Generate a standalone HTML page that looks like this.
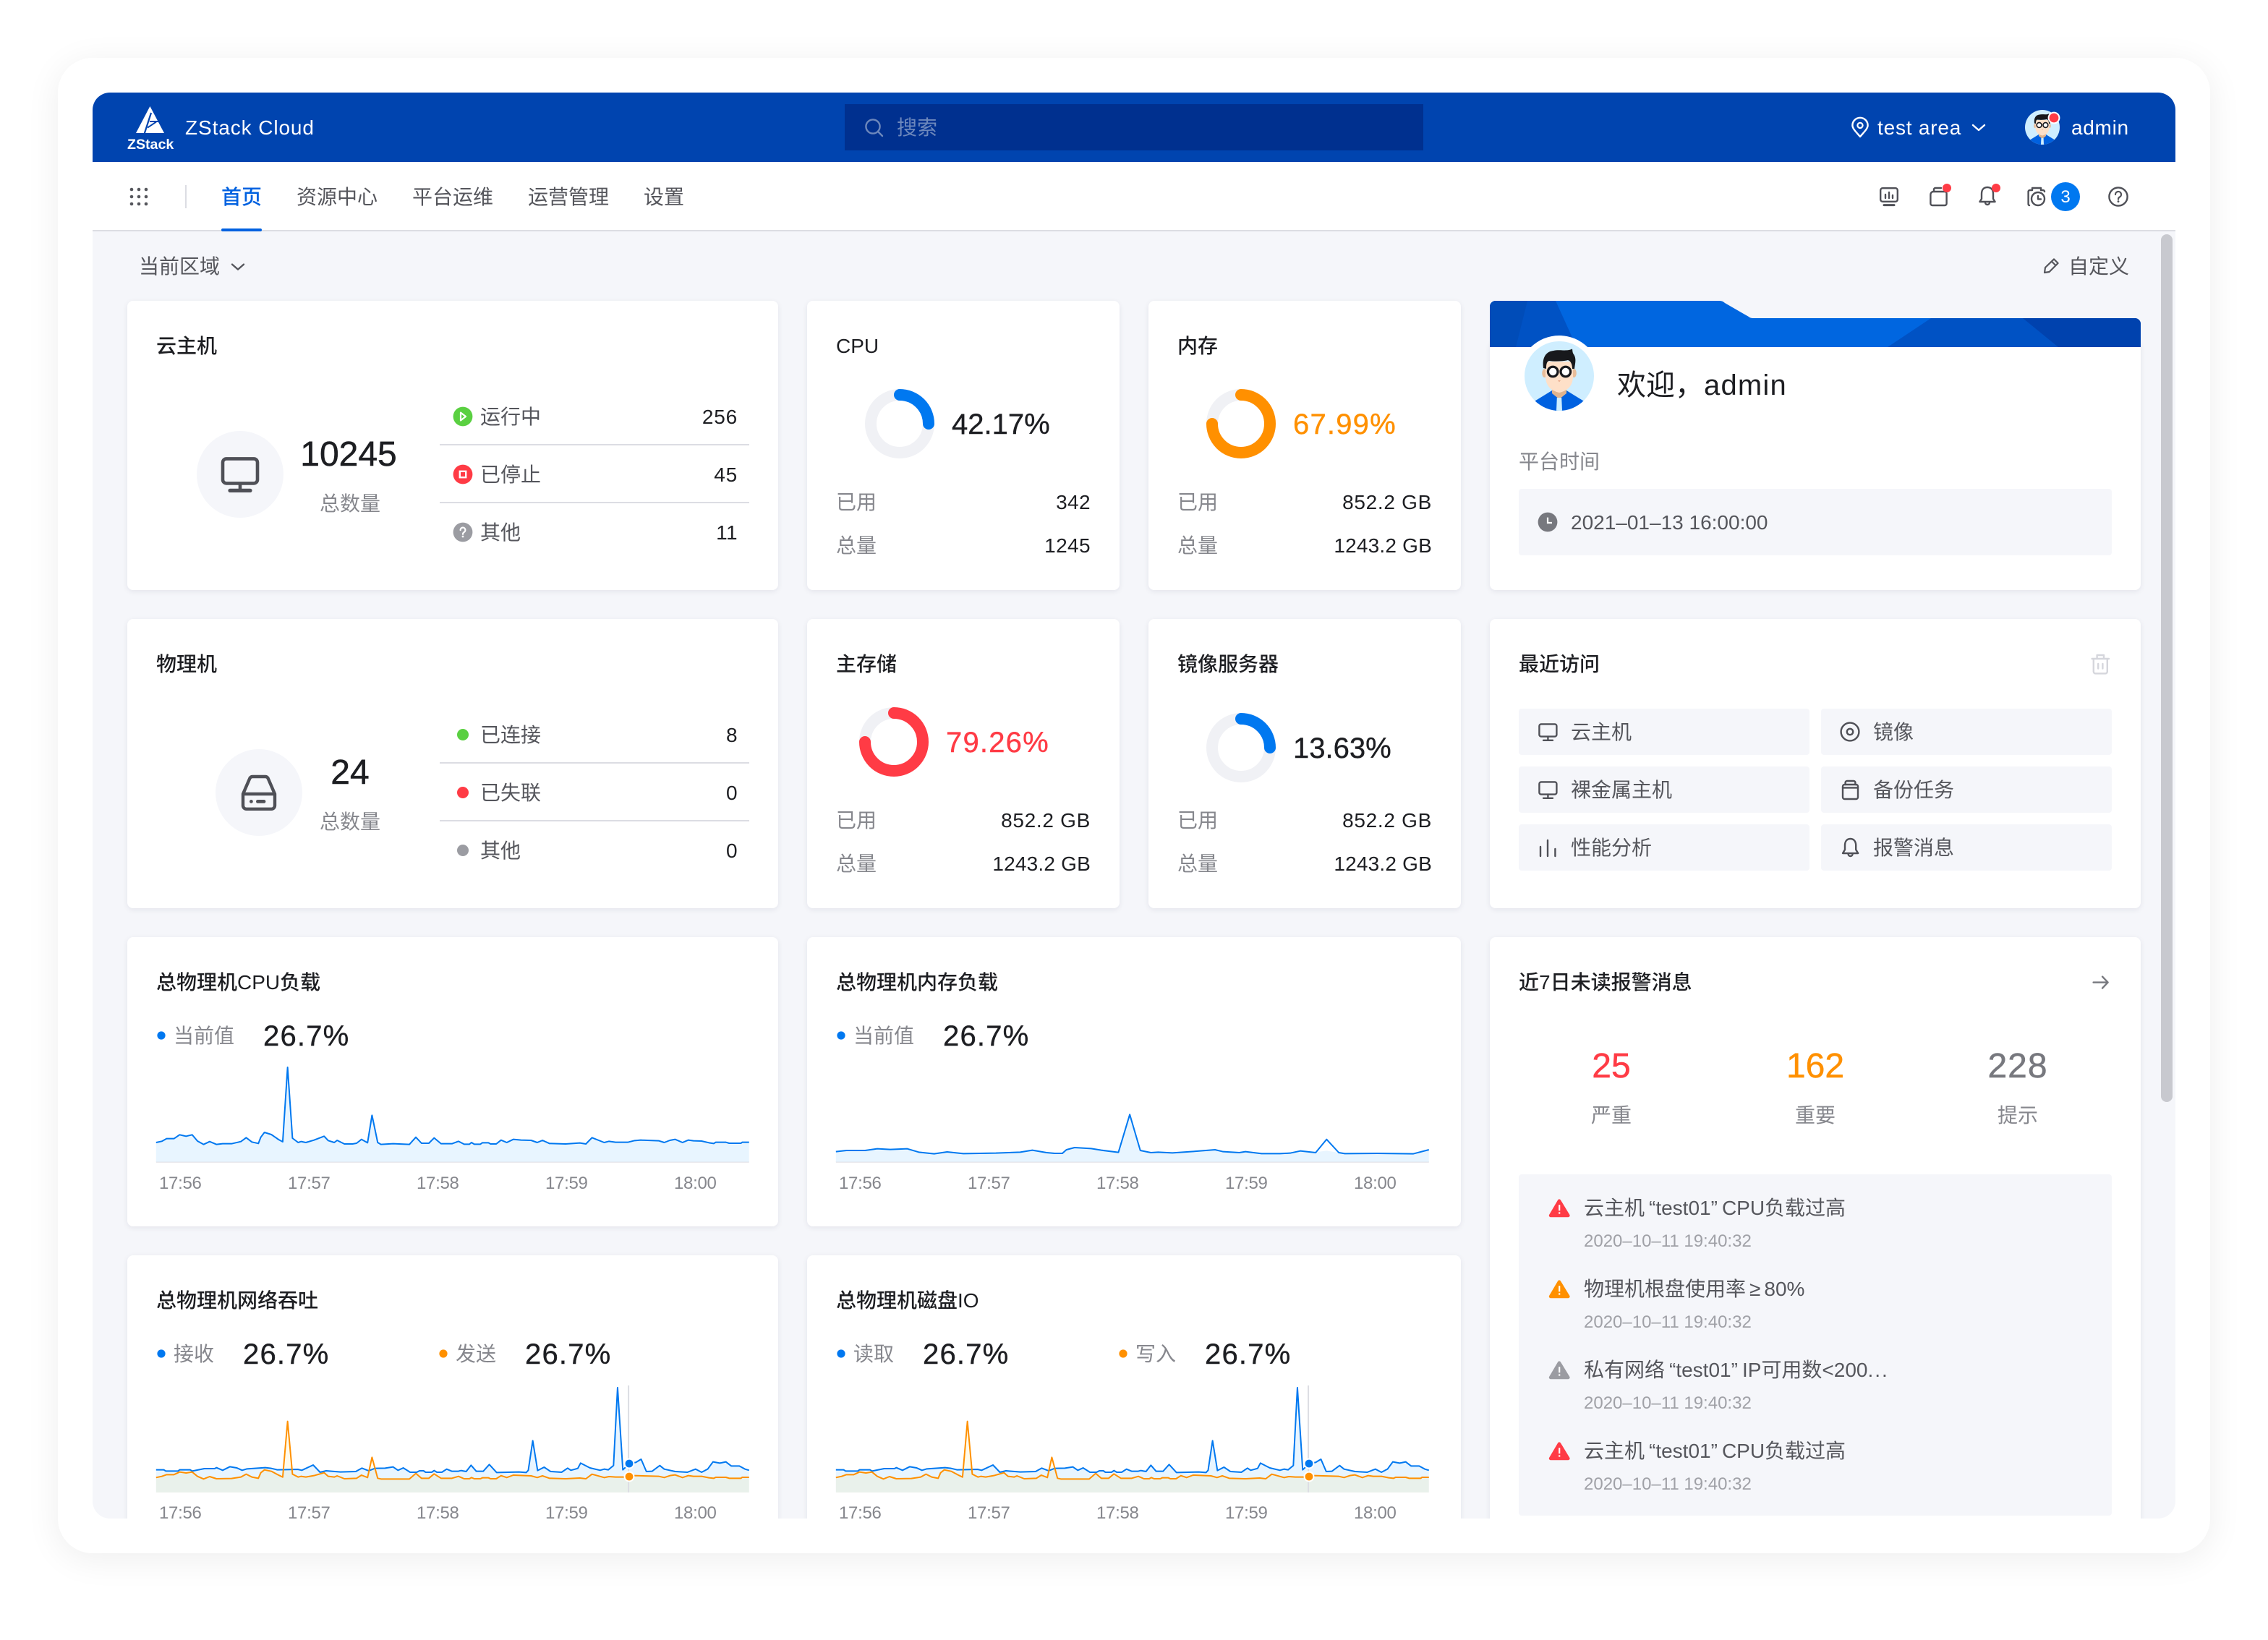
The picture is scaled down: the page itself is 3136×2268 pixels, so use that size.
<!DOCTYPE html>
<html lang="zh">
<head>
<meta charset="utf-8">
<title>ZStack Cloud</title>
<style>
html,body{margin:0;padding:0;background:#fff;width:3136px;height:2268px;overflow:hidden}
#s{position:absolute;left:0;top:0;width:1568px;height:1134px;transform:scale(2);transform-origin:0 0;font-family:"Liberation Sans","Noto Sans CJK SC",sans-serif;font-size:14px;color:#55565c}
#f{position:absolute;left:40px;top:40px;width:1488px;height:1034px;background:#fff;border-radius:24px;box-shadow:0 4px 24px rgba(0,0,0,.07)}
#a{position:absolute;left:64px;top:64px;width:1440px;height:986px;background:#f5f6fa;border-radius:12px;overflow:hidden}
#a>div{position:absolute}
#w{position:absolute;left:-64px;top:-64px;width:1568px;height:1134px}
.b{position:absolute;background:#fff;border-radius:4px;box-shadow:0 1px 4px rgba(20,20,60,.08)}
.p{position:absolute;background:#f5f6fa;border-radius:2px}
#o{position:absolute;left:0;top:0}
.t{position:absolute;white-space:nowrap;line-height:20px}
.r{text-align:right;width:200px}
.c{text-align:center;width:100px}
.k{color:#1d1e22}
.g{color:#86878d}
.h{color:#1d1e22;font-weight:500}
.v{color:#1d1e22;letter-spacing:.2px}
.n{font-size:20px;color:#1d1e22;letter-spacing:.6px;-webkit-text-stroke:.2px currentColor;margin-top:1px}
.n0{letter-spacing:0}
.big{font-size:24px;color:#1d1e22;-webkit-text-stroke:.25px currentColor;margin-top:1px}
.x{font-size:12px;color:#86878d;letter-spacing:-.15px}
.m{font-size:12px;color:#a0a1a7;margin-top:1px}
.q{margin:0 3px}
polyline,polygon.z{vector-effect:non-scaling-stroke}
</style>
</head>
<body>
<div id="s">
<div id="f"></div>
<div id="a"><div id="w">
  <div style="position:absolute;left:64px;top:64px;width:1440px;height:48px;background:#0044af"></div>
  <div style="position:absolute;left:584px;top:72px;width:400px;height:32px;background:#00308f"></div>
  <div style="position:absolute;left:64px;top:112px;width:1440px;height:48px;background:#fff;box-sizing:border-box;border-bottom:1px solid #dcdde3"></div>
  <div style="position:absolute;left:153px;top:158px;width:28px;height:2px;background:#0061e0;border-radius:1px"></div>
  <div style="position:absolute;left:1494px;top:162px;width:8px;height:600px;background:#c8c9cf;border-radius:4px"></div>

  <div class="b" style="left:88px;top:208px;width:450px;height:200px"></div>
  <div class="b" style="left:558px;top:208px;width:216px;height:200px"></div>
  <div class="b" style="left:794px;top:208px;width:216px;height:200px"></div>
  <div class="b" style="left:1030px;top:236px;width:450px;height:172px"></div>
  <div class="b" style="left:88px;top:428px;width:450px;height:200px"></div>
  <div class="b" style="left:558px;top:428px;width:216px;height:200px"></div>
  <div class="b" style="left:794px;top:428px;width:216px;height:200px"></div>
  <div class="b" style="left:1030px;top:428px;width:450px;height:200px"></div>
  <div class="b" style="left:88px;top:648px;width:450px;height:200px"></div>
  <div class="b" style="left:558px;top:648px;width:452px;height:200px"></div>
  <div class="b" style="left:1030px;top:648px;width:450px;height:440px"></div>
  <div class="b" style="left:88px;top:868px;width:450px;height:220px"></div>
  <div class="b" style="left:558px;top:868px;width:452px;height:220px"></div>

  <div class="p" style="left:1050px;top:338px;width:410px;height:46px"></div>
  <div class="p" style="left:1050px;top:490px;width:201px;height:32px"></div>
  <div class="p" style="left:1259px;top:490px;width:201px;height:32px"></div>
  <div class="p" style="left:1050px;top:530px;width:201px;height:32px"></div>
  <div class="p" style="left:1259px;top:530px;width:201px;height:32px"></div>
  <div class="p" style="left:1050px;top:570px;width:201px;height:32px"></div>
  <div class="p" style="left:1259px;top:570px;width:201px;height:32px"></div>
  <div class="p" style="left:1050px;top:812px;width:410px;height:236px"></div>

<svg id="o" width="1568" height="1134" viewBox="0 0 1568 1134" fill="none">
<defs>
  <clipPath id="ac"><circle cx="24" cy="24" r="24"/></clipPath>
  <symbol id="av" viewBox="0 0 48 48">
    <g clip-path="url(#ac)">
      <rect width="48" height="48" fill="#cfeeff"/>
      <path d="M6 42 L19 34 H29 L42 42 V48 H6Z" fill="#0061e0"/>
      <path d="M19 30 H29 V36 L24 40 L19 36Z" fill="#e0b48f"/>
      <path d="M22.4 39 H25.6 L26 48 H22Z" fill="#cfeeff"/>
      <ellipse cx="13.8" cy="22" rx="1.7" ry="3" fill="#e8bd9a"/>
      <ellipse cx="34.2" cy="22" rx="1.7" ry="3" fill="#e8bd9a"/>
      <path d="M14.5 14 H33.5 V25 Q33 33.5 24 35.5 Q15 33.5 14.5 25Z" fill="#fee0c8"/>
      <path d="M13 18.5 C12 11 15 7 20 6.5 C24 5.5 30 7.2 33 5.2 C33.2 7 33.2 8 34 9 C36 12 35 15 34.5 19 L33 19 C33 16 32 13.6 30 13 C26 14 20 14 17 13.5 C15 14 15 17 15 19Z" fill="#17181c"/>
      <circle cx="19.6" cy="21" r="3.4" fill="#fff" stroke="#17181c" stroke-width="1.6"/>
      <circle cx="28.4" cy="21" r="3.4" fill="#fff" stroke="#17181c" stroke-width="1.6"/>
      <path d="M23 27 h2 l-1 1.2z" fill="#e8a98a"/>
    </g>
  </symbol>
  <clipPath id="bn"><path d="M1030 240 V212 a4 4 0 0 1 4-4 H1189 q2 0 3.500 1.500 L1209 219 q1 1 3 1 H1476 a4 4 0 0 1 4 4 V240Z"/></clipPath>

  <g id="net">
    <polygon fill="#e8f5ff" points="46,732 46,638 65,638 70,643 100,643 104,638 130,638 135,643 165,633 190,633 195,629 210,640 228,625 245,630 258,640 270,634 315,629 330,632 345,638 395,636 405,640 433,618 450,648 465,642 500,647 538,645 553,631 570,642 585,632 610,631 630,626 642,640 655,630 672,648 688,648 695,642 705,642 710,648 725,648 731,641 738,648 750,648 762,635 775,644 790,644 797,641 810,645 822,619 835,644 852,644 867,616 885,649 940,647 958,649 963,640 974,517 986,641 1002,627 1018,645 1045,648 1060,631 1068,640 1085,632 1092,610 1115,630 1140,640 1150,635 1160,638 1173,620 1183,297 1196,638 1212,612 1228,607 1241,594 1254,645 1268,644 1287,620 1298,635 1325,645 1355,648 1375,635 1390,648 1405,635 1418,605 1435,610 1450,605 1463,622 1483,622 1497,635 1507,640 1507,732"/>
    <polygon fill="#ffc800" fill-opacity=".08" points="46,732 46,670 60,665 72,658 90,658 104,647 120,651 135,647 148,665 163,676 178,666 195,675 232,674 255,668 268,656 282,668 298,673 304,650 313,638 330,644 348,660 358,668 370,437 382,656 396,668 403,665 415,668 435,662 460,650 470,665 485,668 492,663 510,675 540,673 552,660 567,670 578,586 592,673 600,676 670,676 686,653 700,673 718,673 731,655 748,673 775,673 791,665 805,675 818,675 823,670 830,675 845,675 850,671 865,671 870,675 884,675 896,662 910,670 926,660 970,663 985,670 998,663 1015,673 1055,675 1090,672 1105,675 1120,656 1150,670 1162,666 1178,668 1208,668 1225,662 1285,665 1298,670 1312,662 1325,659 1343,670 1357,662 1370,665 1390,665 1408,671 1420,673 1425,669 1450,669 1458,673 1487,673 1490,669 1507,669 1507,732"/>
    <polyline stroke="#dcdde3" stroke-width="1" points="1210,288 1210,732"/>
    <polyline stroke="#0078f0" stroke-width="1" stroke-linejoin="round" points="46,638 65,638 70,643 100,643 104,638 130,638 135,643 165,633 190,633 195,629 210,640 228,625 245,630 258,640 270,634 315,629 330,632 345,638 395,636 405,640 433,618 450,648 465,642 500,647 538,645 553,631 570,642 585,632 610,631 630,626 642,640 655,630 672,648 688,648 695,642 705,642 710,648 725,648 731,641 738,648 750,648 762,635 775,644 790,644 797,641 810,645 822,619 835,644 852,644 867,616 885,649 940,647 958,649 963,640 974,517 986,641 1002,627 1018,645 1045,648 1060,631 1068,640 1085,632 1092,610 1115,630 1140,640 1150,635 1160,638 1173,620 1183,297 1196,638 1212,612 1228,607 1241,594 1254,645 1268,644 1287,620 1298,635 1325,645 1355,648 1375,635 1390,648 1405,635 1418,605 1435,610 1450,605 1463,622 1483,622 1497,635 1507,640"/>
    <polyline stroke="#ff9000" stroke-width="1" stroke-linejoin="round" points="46,670 60,665 72,658 90,658 104,647 120,651 135,647 148,665 163,676 178,666 195,675 232,674 255,668 268,656 282,668 298,673 304,650 313,638 330,644 348,660 358,668 370,437 382,656 396,668 403,665 415,668 435,662 460,650 470,665 485,668 492,663 510,675 540,673 552,660 567,670 578,586 592,673 600,676 670,676 686,653 700,673 718,673 731,655 748,673 775,673 791,665 805,675 818,675 823,670 830,675 845,675 850,671 865,671 870,675 884,675 896,662 910,670 926,660 970,663 985,670 998,663 1015,673 1055,675 1090,672 1105,675 1120,656 1150,670 1162,666 1178,668 1208,668 1225,662 1285,665 1298,670 1312,662 1325,659 1343,670 1357,662 1370,665 1390,665 1408,671 1420,673 1425,669 1450,669 1458,673 1487,673 1490,669 1507,669"/>
  </g>
</defs>

<!-- logo -->
<path d="M103.700 73.500 L94 92 H113.500Z" fill="#fff"/>
<path d="M104.500 78 L99.800 92.500" stroke="#0044af" stroke-width="1.100"/>
<path d="M103.500 84 H109.500 M102 88.300 L108 84.300" stroke="#0044af" stroke-width="1"/>

<!-- search -->
<circle cx="603.500" cy="87.500" r="4.800" stroke="#6d88bc" stroke-width="1.200"/>
<path d="M607 91 L610 94" stroke="#6d88bc" stroke-width="1.200" stroke-linecap="round"/>

<!-- header right -->
<path d="M1286 94.500 C1283.500 91.500 1280.700 89 1280.700 86.700 A5.300 5.300 0 1 1 1291.300 86.700 C1291.300 89 1288.500 91.500 1286 94.500Z" stroke="#fff" stroke-width="1.200" stroke-linejoin="round"/>
<circle cx="1286" cy="86.700" r="1.800" stroke="#fff" stroke-width="1.100"/>
<path d="M1364 86.500 L1368 90 L1372 86.500" stroke="#fff" stroke-width="1.200" stroke-linecap="round" stroke-linejoin="round"/>
<use href="#av" x="1400" y="76" width="24" height="24"/>
<circle cx="1420" cy="81.500" r="3.700" fill="#ff3b45" stroke="#fff" stroke-width="1"/>

<!-- grid -->
<g fill="#55565c"><circle cx="91" cy="131" r="1.150"/><circle cx="96" cy="131" r="1.150"/><circle cx="101" cy="131" r="1.150"/><circle cx="91" cy="136" r="1.150"/><circle cx="96" cy="136" r="1.150"/><circle cx="101" cy="136" r="1.150"/><circle cx="91" cy="141" r="1.150"/><circle cx="96" cy="141" r="1.150"/><circle cx="101" cy="141" r="1.150"/></g>
<path d="M128.500 128 V144" stroke="#dcdde3" stroke-width="1"/>

<!-- nav right icons -->
<g stroke="#4f5057" stroke-width="1.200" stroke-linecap="round" stroke-linejoin="round">
  <rect x="1300.100" y="130.100" width="11.800" height="9.300" rx="1.500"/>
  <path d="M1302.500 141.800 H1309.500" stroke-width="1.500"/>
  <path d="M1303.500 134.500 V137 M1306 133 V137 M1308.500 135 V137"/>
  <path d="M1336.500 132.500 H1344.500 A1.300 1.300 0 0 1 1345.800 133.800 V140.700 A1.300 1.300 0 0 1 1344.500 142 H1336 A1.300 1.300 0 0 1 1334.700 140.700 V134.500 A2 2 0 0 1 1336.500 132.500Z"/>
  <path d="M1337 132.500 V131 A1 1 0 0 1 1338 130 H1342"/>
  <path d="M1374 129.500 C1371 129.500 1370 131.800 1370 134 V137.500 L1368.700 139.500 H1379.300 L1378 137.500 V134 C1378 131.800 1377 129.500 1374 129.500Z"/>
  <path d="M1372.500 140 A1.500 1.500 0 0 0 1375.500 140"/>
  <path d="M1403 142 A1 1 0 0 1 1402.300 141 V132.500 A1 1 0 0 1 1403.300 131.500 H1405 M1405 131.500 V130 H1411 V131.500 H1412.500 A1 1 0 0 1 1413.500 132.500"/>
  <circle cx="1409" cy="137.500" r="4.500"/>
  <path d="M1409 135.500 V137.700 H1411"/>
  <circle cx="1464.500" cy="136" r="6.300"/>
</g>
<circle cx="1346" cy="130" r="3" fill="#ff3b45"/>
<circle cx="1380" cy="130" r="3" fill="#ff3b45"/>
<circle cx="1428" cy="136" r="10" fill="#0078f0"/>
<path d="M1462.500 134.500 A2 2 0 1 1 1465.300 136.300 C1464.700 136.700 1464.500 137 1464.500 137.800" stroke="#4f5057" stroke-width="1.100" stroke-linecap="round"/>
<circle cx="1464.500" cy="139.300" r=".7" fill="#4f5057"/>

<!-- region / pencil -->
<path d="M160.500 182.800 L164.500 186.300 L168.500 182.800" stroke="#55565c" stroke-width="1.200" stroke-linecap="round" stroke-linejoin="round"/>
<path d="M1413.500 188.500 L1414 185 L1420 179.200 L1422.800 182 L1416.800 188Z M1418.500 180.800 L1421.200 183.500" stroke="#55565c" stroke-width="1.100" stroke-linejoin="round"/>

<!-- card 1 -->
<circle cx="166" cy="328" r="30" fill="#f5f6fa"/>
<rect x="154" y="317.200" width="24" height="17" rx="2.500" stroke="#4f5057" stroke-width="2.300"/>
<path d="M166 334.500 V339" stroke="#4f5057" stroke-width="2.300"/>
<path d="M159 339.200 H173" stroke="#4f5057" stroke-width="2.600" stroke-linecap="round"/>
<path d="M304 307.500 H518 M304 347.500 H518 M304 527.500 H518 M304 567.500 H518" stroke="#dcdde3" stroke-width="1"/>
<circle cx="320" cy="288" r="6.700" fill="#5ad041"/>
<path d="M318.500 285.300 L322 288 L318.500 290.700Z" stroke="#fff" stroke-width="1.100" stroke-linejoin="round"/>
<circle cx="320" cy="328" r="6.700" fill="#ff3b45"/>
<rect x="317.900" y="325.900" width="4.200" height="4.200" stroke="#fff" stroke-width="1.200"/>
<circle cx="320" cy="368" r="6.700" fill="#9b9ca2"/>
<path d="M318.300 366.500 A1.700 1.700 0 1 1 320.800 368 C320.200 368.400 320 368.700 320 369.400" stroke="#fff" stroke-width="1.100" stroke-linecap="round"/>
<circle cx="320" cy="371" r=".7" fill="#fff"/>

<!-- card 2 -->
<circle cx="179" cy="548" r="30" fill="#f5f6fa"/>
<path d="M174.500 537 H183.500 A2 2 0 0 1 185.400 538.400 L190 549 V557 A2.400 2.400 0 0 1 187.600 559.400 H170.400 A2.400 2.400 0 0 1 168 557 V549 L172.600 538.400 A2 2 0 0 1 174.500 537Z M168 549 H190" stroke="#4f5057" stroke-width="2.200" stroke-linejoin="round"/>
<circle cx="173.700" cy="554.200" r="1.200" fill="#4f5057"/>
<path d="M178.200 554.200 H182.500" stroke="#4f5057" stroke-width="2.400" stroke-linecap="round"/>
<circle cx="320" cy="508" r="4" fill="#5ad041"/>
<circle cx="320" cy="548" r="4" fill="#ff3b45"/>
<circle cx="320" cy="588" r="4" fill="#9b9ca2"/>

<!-- donuts -->
<circle cx="622" cy="293" r="20" stroke="#f0f1f5" stroke-width="8"/>
<path d="M622 273 A20 20 0 0 1 642 293" stroke="#0078f0" stroke-width="8" stroke-linecap="round"/>
<circle cx="858" cy="293" r="20" stroke="#f0f1f5" stroke-width="8"/>
<path d="M858 273 A20 20 0 1 1 838 293" stroke="#ff9000" stroke-width="8" stroke-linecap="round"/>
<circle cx="618" cy="513" r="20" stroke="#f0f1f5" stroke-width="8"/>
<path d="M618 493 A20 20 0 1 1 598 513" stroke="#ff3b45" stroke-width="8" stroke-linecap="round"/>
<circle cx="858" cy="517" r="20" stroke="#f0f1f5" stroke-width="8"/>
<path d="M858 497 A20 20 0 0 1 878 517" stroke="#0078f0" stroke-width="8" stroke-linecap="round"/>

<!-- welcome banner -->
<g clip-path="url(#bn)">
  <rect x="1030" y="208" width="450" height="32" fill="#0066e0"/>
  <polygon points="1030,208 1075.500,208 1090,240 1030,240" fill="#0052c4"/>
  <polygon points="1030,208 1056,208 1048,240 1030,240" fill="#004cb8"/>
  <polygon points="1305,240 1335,220 1480,220 1480,240" fill="#0052c4"/>
  <polygon points="1398.500,220 1423,240 1480,240 1480,220" fill="#0042ae"/>
</g>
<circle cx="1078" cy="260" r="28" fill="#fff"/>
<rect x="1040" y="240" width="76" height="50" fill="#fff"/>
<use href="#av" x="1054" y="236" width="48" height="48"/>
<circle cx="1070" cy="361" r="6.700" fill="#77787e"/>
<path d="M1070 357.800 V361.500 H1073" stroke="#fff" stroke-width="1.100"/>

<!-- recent icons -->
<g stroke="#4f5057" stroke-width="1.200" stroke-linecap="round" stroke-linejoin="round">
  <rect x="1064.200" y="500.700" width="12" height="8.600" rx="1.300"/><path d="M1070.200 509.300 V511.700 M1067 511.900 H1073.500"/>
  <rect x="1064.200" y="540.700" width="12" height="8.600" rx="1.300"/><path d="M1070.200 549.300 V551.700 M1067 551.900 H1073.500"/>
  <circle cx="1279" cy="506" r="6.200"/><circle cx="1279" cy="506" r="2.100"/>
  <rect x="1274" y="542.500" width="10.500" height="10" rx="1.300"/><path d="M1275.800 542.500 V541 A1.200 1.200 0 0 1 1277 540 H1281.500 A1.200 1.200 0 0 1 1282.700 541 V542.500 M1274 544.700 H1284.500"/>
  <path d="M1065 585.500 V592 M1070 581 V592 M1075.200 587 V592"/>
  <path d="M1279.300 580 C1276.500 580 1275.500 582.200 1275.500 584.500 V587.500 L1274 590 H1284.600 L1283.100 587.500 V584.500 C1283.100 582.200 1282 580 1279.300 580Z M1277.800 590.500 A1.500 1.500 0 0 0 1280.800 590.500"/>
</g>
<g stroke="#d5d6dc" stroke-width="1.200" stroke-linecap="round" stroke-linejoin="round">
  <path d="M1446.300 455.500 H1458 M1449.800 455.300 V453 H1454.500 V455.300 M1447.400 455.800 V464.400 A1.300 1.300 0 0 0 1448.700 465.700 H1455.600 A1.300 1.300 0 0 0 1456.900 464.400 V455.800 M1450.600 459 V462.300 M1453.700 459 V462.300"/>
</g>
<path d="M1447.300 679.300 H1457.300 M1453.500 675.300 L1457.300 679.300 L1453.500 683.300" stroke="#77787e" stroke-width="1.200" stroke-linecap="round" stroke-linejoin="round"/>

<!-- alerts -->
<g stroke-width="2.200" stroke-linejoin="round">
  <path d="M1078 830.300 L1072 840.500 H1084.200Z" fill="#ff3b45" stroke="#ff3b45"/>
  <path d="M1078 886.300 L1072 896.500 H1084.200Z" fill="#ff9000" stroke="#ff9000"/>
  <path d="M1078 942.300 L1072 952.500 H1084.200Z" fill="#9b9ca2" stroke="#9b9ca2"/>
  <path d="M1078 998.300 L1072 1008.500 H1084.200Z" fill="#ff3b45" stroke="#ff3b45"/>
</g>
<g stroke="#fff" stroke-width="1.100"><path d="M1078.100 833.100 V837.100 M1078.100 838.200 V839.300"/><path d="M1078.100 889.100 V893.100 M1078.100 894.200 V895.300"/><path d="M1078.100 945.100 V949.100 M1078.100 950.200 V951.300"/><path d="M1078.100 1001.100 V1005.100 M1078.100 1006.200 V1007.300"/></g>

<!-- chart 1 -->
<svg x="95" y="690" width="440" height="140" viewBox="0 0 1568 840" preserveAspectRatio="none">
  <rect x="46" y="678" width="1461" height="5" fill="#dcdde3"/>
  <polygon fill="#e8f5ff" points="46,680 46,600 60,595 72,584 90,584 104,568 120,574 135,568 148,594 163,608 178,596 195,608 210,605 232,605 255,596 268,580 282,598 298,604 304,578 313,558 330,567 348,588 358,597 370,288 382,582 396,600 403,596 415,600 435,590 460,574 470,592 485,600 492,591 510,606 530,606 540,603 552,587 567,601 578,487 592,600 600,608 630,605 670,608 686,578 700,603 718,603 731,581 748,605 775,605 791,595 805,607 818,607 823,600 830,607 845,607 850,601 865,601 870,606 884,606 896,590 910,600 926,587 945,590 970,591 985,600 998,591 1015,604 1055,606 1090,602 1105,606 1120,580 1150,600 1162,595 1178,599 1208,599 1225,592 1240,590 1285,593 1298,600 1312,591 1325,587 1343,600 1357,590 1370,593 1390,594 1408,601 1420,604 1425,599 1450,599 1458,603 1487,603 1490,599 1507,599 1507,680"/>
  <polyline stroke="#0078f0" stroke-width="1" stroke-linejoin="round" points="46,600 60,595 72,584 90,584 104,568 120,574 135,568 148,594 163,608 178,596 195,608 210,605 232,605 255,596 268,580 282,598 298,604 304,578 313,558 330,567 348,588 358,597 370,288 382,582 396,600 403,596 415,600 435,590 460,574 470,592 485,600 492,591 510,606 530,606 540,603 552,587 567,601 578,487 592,600 600,608 630,605 670,608 686,578 700,603 718,603 731,581 748,605 775,605 791,595 805,607 818,607 823,600 830,607 845,607 850,601 865,601 870,606 884,606 896,590 910,600 926,587 945,590 970,591 985,600 998,591 1015,604 1055,606 1090,602 1105,606 1120,580 1150,600 1162,595 1178,599 1208,599 1225,592 1240,590 1285,593 1298,600 1312,591 1325,587 1343,600 1357,590 1370,593 1390,594 1408,601 1420,604 1425,599 1450,599 1458,603 1487,603 1490,599 1507,599"/>
</svg>

<!-- chart 2 -->
<svg x="565" y="690" width="440" height="140" viewBox="0 0 1568 840" preserveAspectRatio="none">
  <rect x="46" y="678" width="1461" height="5" fill="#dcdde3"/>
  <polygon fill="#e8f5ff" points="46,680 46,638 72,633 118,633 148,626 180,629 222,626 250,640 288,647 320,639 360,646 440,644 500,640 530,632 565,642 585,645 604,645 614,630 634,621 675,625 700,632 742,641 770,484 796,633 822,642 840,640 875,643 935,636 980,630 1000,638 1040,642 1055,638 1095,646 1140,646 1165,644 1190,635 1228,640 1255,634 1285,642 1300,646 1380,645 1468,647 1507,630 1507,680"/>
  <polyline stroke="#0078f0" stroke-width="1" stroke-linejoin="round" points="46,638 72,633 118,633 148,626 180,629 222,626 250,640 288,647 320,639 360,646 440,644 500,640 530,632 565,642 585,645 604,645 614,630 634,621 675,625 700,632 742,641 770,484 796,633 822,642 840,640 875,643 935,636 980,630 1000,638 1040,642 1055,638 1095,646 1140,646 1165,644 1190,635 1228,642 1255,587 1285,642 1300,646 1380,645 1468,647 1507,630"/>
</svg>

<!-- chart 3/4 -->
<svg x="95" y="910" width="440" height="150" viewBox="0 0 1568 900" preserveAspectRatio="none"><use href="#net"/></svg>
<svg x="565" y="910" width="440" height="150" viewBox="0 0 1568 900" preserveAspectRatio="none"><use href="#net"/></svg>
<g fill="#0078f0" stroke="#fff" stroke-width="1"><circle cx="435" cy="1012" r="3.200"/><circle cx="905" cy="1012" r="3.200"/></g>
<g fill="#ff9000" stroke="#fff" stroke-width="1"><circle cx="435" cy="1021" r="3.200"/><circle cx="905" cy="1021" r="3.200"/></g>

<!-- legend dots -->
<g fill="#0078f0"><circle cx="111.500" cy="716" r="2.800"/><circle cx="581.500" cy="716" r="2.800"/><circle cx="111.500" cy="936" r="2.800"/><circle cx="581.500" cy="936" r="2.800"/></g>
<g fill="#ff9000"><circle cx="306.500" cy="936" r="2.800"/><circle cx="776.500" cy="936" r="2.800"/></g>
</svg>

<span class="t" style="left:88px;top:91px;font-size:9.800px;font-weight:700;color:#fff">ZStack</span>
<span class="t" style="left:128px;top:78px;color:#fff;letter-spacing:.45px">ZStack Cloud</span>
<span class="t" style="left:620px;top:78px;color:#6d88bc">搜索</span>
<span class="t" style="left:1298px;top:78px;color:#fff;letter-spacing:.4px">test area</span>
<span class="t" style="left:1432px;top:78px;color:#fff;letter-spacing:.35px">admin</span>

<span class="t" style="left:153px;top:126px;color:#0061e0;font-weight:500">首页</span>
<span class="t" style="left:205px;top:126px">资源中心</span>
<span class="t" style="left:285px;top:126px">平台运维</span>
<span class="t" style="left:365px;top:126px">运营管理</span>
<span class="t" style="left:445px;top:126px">设置</span>
<span class="t c" style="left:1378px;top:126px;color:#fff;font-size:12px">3</span>

<span class="t" style="left:96px;top:174px">当前区域</span>
<span class="t" style="left:1430px;top:174px">自定义</span>

<span class="t h" style="left:108px;top:229px">云主机</span>
<span class="t c big" style="left:191px;top:304px">10245</span>
<span class="t c g" style="left:192px;top:338px">总数量</span>
<span class="t" style="left:332px;top:278px">运行中</span><span class="t r v" style="left:310px;top:278px;letter-spacing:.4px">256</span>
<span class="t" style="left:332px;top:318px">已停止</span><span class="t r v" style="left:310px;top:318px;letter-spacing:.4px">45</span>
<span class="t" style="left:332px;top:358px">其他</span><span class="t r v" style="left:310px;top:358px">11</span>

<span class="t h" style="left:578px;top:229px">CPU</span>
<span class="t n n0" style="left:658px;top:283px">42.17%</span>
<span class="t g" style="left:578px;top:337px">已用</span><span class="t r v" style="left:554px;top:337px">342</span>
<span class="t g" style="left:578px;top:367px">总量</span><span class="t r v" style="left:554px;top:367px">1245</span>

<span class="t h" style="left:814px;top:229px">内存</span>
<span class="t n" style="left:894px;top:283px;color:#ff9000">67.99%</span>
<span class="t g" style="left:814px;top:337px">已用</span><span class="t r v" style="left:790px;top:337px;letter-spacing:.35px">852.2 GB</span>
<span class="t g" style="left:814px;top:367px">总量</span><span class="t r v" style="left:790px;top:367px;letter-spacing:.1px">1243.2 GB</span>

<span class="t k" style="left:1118px;top:257px;font-size:20px"><span>欢迎，</span><span style="letter-spacing:.6px">admin</span></span>
<span class="t g" style="left:1050px;top:309px">平台时间</span>
<span class="t" style="left:1086px;top:351px">2021–01–13 16:00:00</span>

<span class="t h" style="left:108px;top:449px">物理机</span>
<span class="t c big" style="left:192px;top:524px">24</span>
<span class="t c g" style="left:192px;top:558px">总数量</span>
<span class="t" style="left:332px;top:498px">已连接</span><span class="t r v" style="left:310px;top:498px">8</span>
<span class="t" style="left:332px;top:538px">已失联</span><span class="t r v" style="left:310px;top:538px">0</span>
<span class="t" style="left:332px;top:578px">其他</span><span class="t r v" style="left:310px;top:578px">0</span>

<span class="t h" style="left:578px;top:449px">主存储</span>
<span class="t n" style="left:654px;top:503px;color:#ff3b45">79.26%</span>
<span class="t g" style="left:578px;top:557px">已用</span><span class="t r v" style="left:554px;top:557px;letter-spacing:.35px">852.2 GB</span>
<span class="t g" style="left:578px;top:587px">总量</span><span class="t r v" style="left:554px;top:587px;letter-spacing:.1px">1243.2 GB</span>

<span class="t h" style="left:814px;top:449px">镜像服务器</span>
<span class="t n n0" style="left:894px;top:507px">13.63%</span>
<span class="t g" style="left:814px;top:557px">已用</span><span class="t r v" style="left:790px;top:557px;letter-spacing:.35px">852.2 GB</span>
<span class="t g" style="left:814px;top:587px">总量</span><span class="t r v" style="left:790px;top:587px;letter-spacing:.1px">1243.2 GB</span>

<span class="t h" style="left:1050px;top:449px">最近访问</span>
<span class="t" style="left:1086px;top:496px">云主机</span><span class="t" style="left:1295px;top:496px">镜像</span>
<span class="t" style="left:1086px;top:536px">裸金属主机</span><span class="t" style="left:1295px;top:536px">备份任务</span>
<span class="t" style="left:1086px;top:576px">性能分析</span><span class="t" style="left:1295px;top:576px">报警消息</span>

<span class="t h" style="left:108px;top:669px">总物理机CPU负载</span>
<span class="t g" style="left:120px;top:706px">当前值</span><span class="t n" style="left:182px;top:706px">26.7%</span>
<span class="t x" style="left:110px;top:808px">17:56</span><span class="t x" style="left:199px;top:808px">17:57</span><span class="t x" style="left:288px;top:808px">17:58</span><span class="t x" style="left:377px;top:808px">17:59</span><span class="t x" style="left:466px;top:808px">18:00</span>

<span class="t h" style="left:578px;top:669px">总物理机内存负载</span>
<span class="t g" style="left:590px;top:706px">当前值</span><span class="t n" style="left:652px;top:706px">26.7%</span>
<span class="t x" style="left:580px;top:808px">17:56</span><span class="t x" style="left:669px;top:808px">17:57</span><span class="t x" style="left:758px;top:808px">17:58</span><span class="t x" style="left:847px;top:808px">17:59</span><span class="t x" style="left:936px;top:808px">18:00</span>

<span class="t h" style="left:1050px;top:669px">近7日未读报警消息</span>
<span class="t c big" style="left:1064px;top:727px;color:#ff3b45">25</span>
<span class="t c big" style="left:1205px;top:727px;color:#ff9000">162</span>
<span class="t c big" style="left:1345px;top:727px;color:#77787e;letter-spacing:.5px">228</span>
<span class="t c g" style="left:1064px;top:761px">严重</span>
<span class="t c g" style="left:1205px;top:761px">重要</span>
<span class="t c g" style="left:1345px;top:761px">提示</span>
<span class="t" style="left:1095px;top:825px">云主机<span class="q">“test01”</span>CPU负载过高</span><span class="t m" style="left:1095px;top:847px">2020–10–11 19:40:32</span>
<span class="t" style="left:1095px;top:881px">物理机根盘使用率<span style="margin:0 2.500px">≥</span>80%</span><span class="t m" style="left:1095px;top:903px">2020–10–11 19:40:32</span>
<span class="t" style="left:1095px;top:937px">私有网络<span class="q">“test01”</span>IP可用数&lt;200<span style="letter-spacing:1px">...</span></span><span class="t m" style="left:1095px;top:959px">2020–10–11 19:40:32</span>
<span class="t" style="left:1095px;top:993px">云主机<span class="q">“test01”</span>CPU负载过高</span><span class="t m" style="left:1095px;top:1015px">2020–10–11 19:40:32</span>

<span class="t h" style="left:108px;top:889px">总物理机网络吞吐</span>
<span class="t g" style="left:120px;top:926px">接收</span><span class="t n" style="left:168px;top:926px">26.7%</span>
<span class="t g" style="left:315px;top:926px">发送</span><span class="t n" style="left:363px;top:926px">26.7%</span>
<span class="t x" style="left:110px;top:1036px">17:56</span><span class="t x" style="left:199px;top:1036px">17:57</span><span class="t x" style="left:288px;top:1036px">17:58</span><span class="t x" style="left:377px;top:1036px">17:59</span><span class="t x" style="left:466px;top:1036px">18:00</span>

<span class="t h" style="left:578px;top:889px">总物理机磁盘IO</span>
<span class="t g" style="left:590px;top:926px">读取</span><span class="t n" style="left:638px;top:926px">26.7%</span>
<span class="t g" style="left:785px;top:926px">写入</span><span class="t n" style="left:833px;top:926px">26.7%</span>
<span class="t x" style="left:580px;top:1036px">17:56</span><span class="t x" style="left:669px;top:1036px">17:57</span><span class="t x" style="left:758px;top:1036px">17:58</span><span class="t x" style="left:847px;top:1036px">17:59</span><span class="t x" style="left:936px;top:1036px">18:00</span>
</div></div>
</div>
</body>
</html>
